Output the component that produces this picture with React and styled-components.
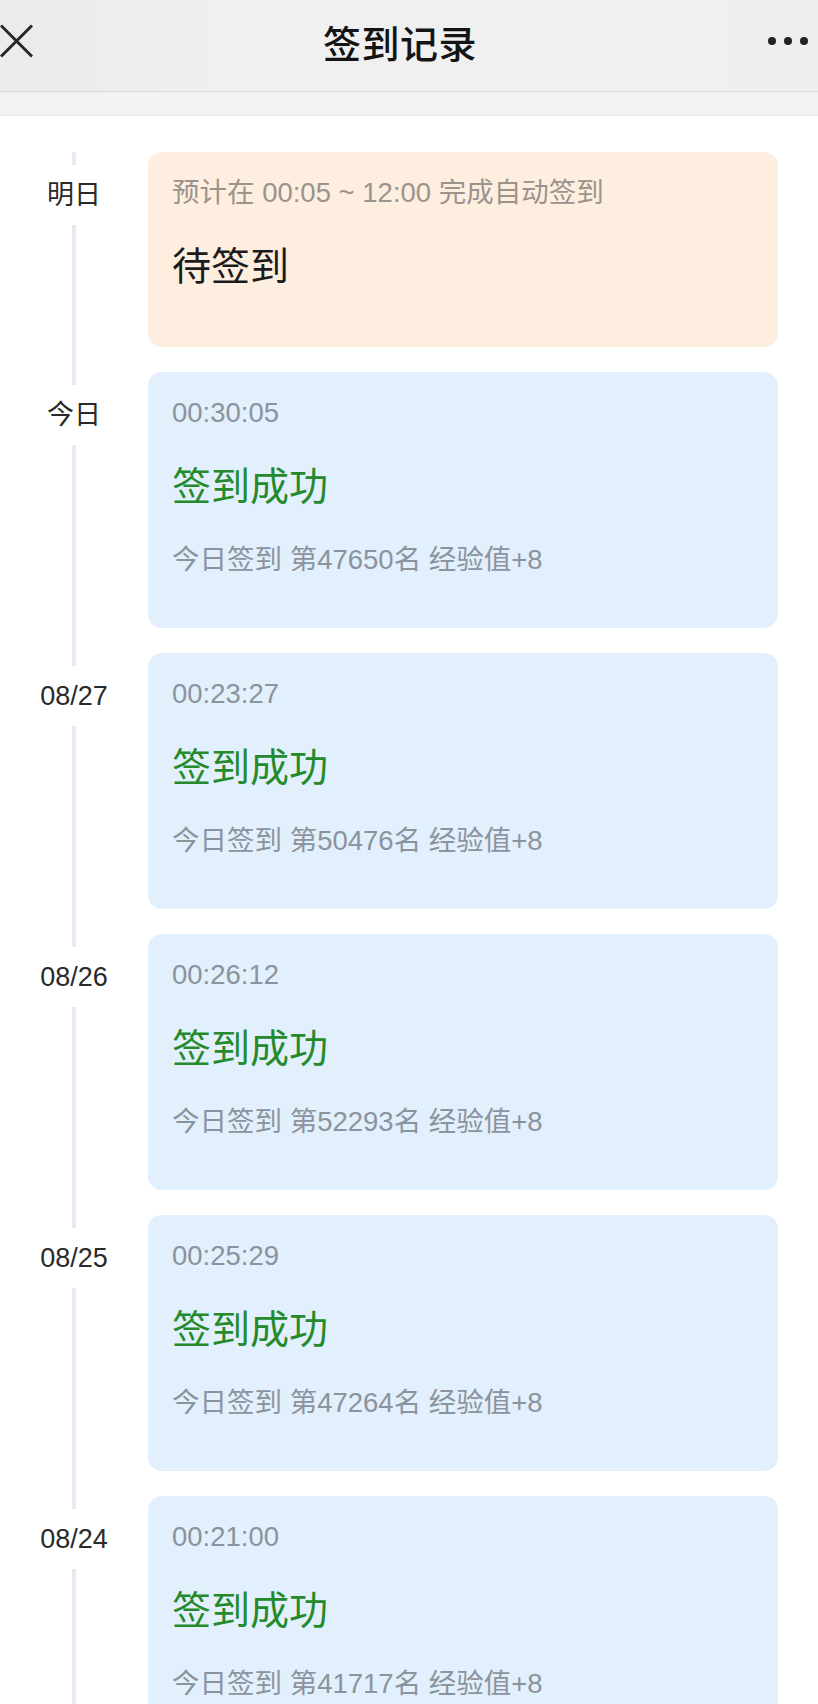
import styled, { createGlobalStyle } from "styled-components";

const GlobalStyle = createGlobalStyle`
  html, body {
    margin: 0;
    padding: 0;
    background: #ffffff;
  }
  body {
    font-family: "Liberation Sans", "Noto Sans CJK SC", sans-serif;
  }
`;

const records = [
    { date: "08/27", time: "00:23:27", rank: "50476" },
    { date: "08/26", time: "00:26:12", rank: "52293" },
    { date: "08/25", time: "00:25:29", rank: "47264" },
    { date: "08/24", time: "00:21:00", rank: "41717" },
];

function App() {
    return (
        <Page>
            <GlobalStyle />
            <NavBar>
                <NavSlot>
                    <CloseIcon viewBox="0 0 33 34">
                        <path d="M1 1.5 L32 32.5 M32 1.5 L1 32.5" />
                    </CloseIcon>
                </NavSlot>
                <NavTitle>签到记录</NavTitle>
                <NavSlot $end>
                    <Dot />
                    <Dot />
                    <Dot />
                </NavSlot>
            </NavBar>
            <SubBar />
            <Timeline>
                <Row>
                    <Rail>
                        <DateLabel>明日</DateLabel>
                    </Rail>
                    <CardCell>
                        <Card $bg="#fdeee0" $min="195px">
                            <Meta $color="#9b938c">预计在 00:05 ~ 12:00 完成自动签到</Meta>
                            <Status $color="#1b1b1b">待签到</Status>
                        </Card>
                    </CardCell>
                </Row>
                <Row>
                    <Rail>
                        <DateLabel>今日</DateLabel>
                    </Rail>
                    <CardCell>
                        <SuccessCard time="00:30:05" rank="47650" />
                    </CardCell>
                </Row>
                {records.map((r) => (
                    <Row key={r.date}>
                        <Rail>
                            <DateLabel>{r.date}</DateLabel>
                        </Rail>
                        <CardCell>
                            <SuccessCard time={r.time} rank={r.rank} />
                        </CardCell>
                    </Row>
                ))}
            </Timeline>
        </Page>
    );
}

function SuccessCard({ time, rank }) {
    return (
        <Card $bg="#e2effd">
            <Meta $color="#8b939c">{time}</Meta>
            <Status $color="#248a2b">签到成功</Status>
            <Footer>今日签到 第{rank}名 经验值+8</Footer>
        </Card>
    );
}

const Page = styled.div`
    width: 818px;
    height: 1704px;
    overflow: hidden;
    background: #ffffff;
`;

const NavBar = styled.header`
    box-sizing: border-box;
    height: 92px;
    padding-bottom: 9px;
    display: grid;
    grid-template-columns: 100px 1fr 118px;
    align-items: center;
    background: linear-gradient(90deg, #ebebeb 0%, #f0f0f0 30%, #efefef 100%);
    border-bottom: 1px solid #d8d8d8;
`;

const NavSlot = styled.div`
    display: flex;
    align-items: center;
    justify-content: ${(p) => (p.$end ? "flex-end" : "flex-start")};
    gap: 8px;
    padding-right: ${(p) => (p.$end ? "10px" : "0")};
`;

const CloseIcon = styled.svg`
    width: 33px;
    height: 34px;
    fill: none;
    stroke: #262626;
    stroke-width: 3;
`;

const Dot = styled.span`
    width: 8px;
    height: 8px;
    border-radius: 50%;
    background: #222222;
`;

const NavTitle = styled.h1`
    margin: 0;
    text-align: center;
    font-size: 38px;
    font-weight: 500;
    color: #141414;
    letter-spacing: 0.5px;
`;

const SubBar = styled.div`
    height: 23px;
    background: #f2f2f2;
    border-bottom: 1px solid #e9e9e9;
`;

const Timeline = styled.main`
    padding-top: 36px;
`;

const Row = styled.section`
    display: grid;
    grid-template-columns: 148px 630px;
`;

const Rail = styled.div`
    display: flex;
    justify-content: center;
    align-items: flex-start;
    background: linear-gradient(#e5ebf3, #e5ebf3) no-repeat center / 4px 100%;
`;

const DateLabel = styled.span`
    margin-top: 13px;
    height: 60px;
    line-height: 60px;
    padding: 0 4px;
    background: #ffffff;
    font-size: 27px;
    color: #2a2a2a;
`;

const CardCell = styled.div`
    padding-bottom: 25px;
`;

const Card = styled.div`
    box-sizing: border-box;
    min-height: ${(p) => p.$min || "255px"};
    padding: 24px 24px 50px;
    border-radius: 14px;
    background: ${(p) => p.$bg};
`;

const Meta = styled.div`
    font-size: 27.5px;
    line-height: 34px;
    color: ${(p) => p.$color};
`;

const Status = styled.div`
    margin-top: 30px;
    font-size: 39px;
    line-height: 54px;
    color: ${(p) => p.$color};
`;

const Footer = styled.div`
    margin-top: 28px;
    font-size: 27.5px;
    line-height: 36px;
    color: #8b939c;
`;

export default App;
